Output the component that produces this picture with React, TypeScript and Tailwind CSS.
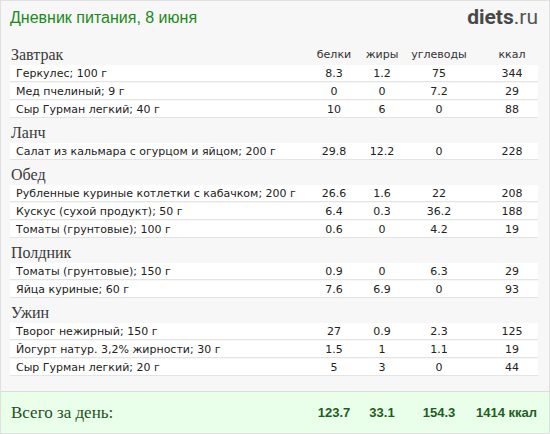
import React from "react";

type Item = { name: string; p: string; f: string; c: string; k: string };
type Meal = { title: string; items: Item[] };

const meals: Meal[] = [
  {
    title: "Завтрак",
    items: [
      { name: "Геркулес; 100 г", p: "8.3", f: "1.2", c: "75", k: "344" },
      { name: "Мед пчелиный; 9 г", p: "0", f: "0", c: "7.2", k: "29" },
      { name: "Сыр Гурман легкий; 40 г", p: "10", f: "6", c: "0", k: "88" },
    ],
  },
  {
    title: "Ланч",
    items: [{ name: "Салат из кальмара с огурцом и яйцом; 200 г", p: "29.8", f: "12.2", c: "0", k: "228" }],
  },
  {
    title: "Обед",
    items: [
      { name: "Рубленные куриные котлетки с кабачком; 200 г", p: "26.6", f: "1.6", c: "22", k: "208" },
      { name: "Кускус (сухой продукт); 50 г", p: "6.4", f: "0.3", c: "36.2", k: "188" },
      { name: "Томаты (грунтовые); 100 г", p: "0.6", f: "0", c: "4.2", k: "19" },
    ],
  },
  {
    title: "Полдник",
    items: [
      { name: "Томаты (грунтовые); 150 г", p: "0.9", f: "0", c: "6.3", k: "29" },
      { name: "Яйца куриные; 60 г", p: "7.6", f: "6.9", c: "0", k: "93" },
    ],
  },
  {
    title: "Ужин",
    items: [
      { name: "Творог нежирный; 150 г", p: "27", f: "0.9", c: "2.3", k: "125" },
      { name: "Йогурт натур. 3,2% жирности; 30 г", p: "1.5", f: "1", c: "1.1", k: "19" },
      { name: "Сыр Гурман легкий; 20 г", p: "5", f: "3", c: "0", k: "44" },
    ],
  },
];

const cols = "grid grid-cols-[300px_48px_48px_66px_15px_50px] items-center";

export default function App() {
  return (
    <div className="w-[550px] h-[434px] border border-[#e0e0e0] bg-[#f7f7f7] flex flex-col font-['DejaVu_Sans',sans-serif]">
      <div className="h-[40px] pl-[9px] pr-[11px] flex items-center justify-between">
        <div className="font-['Liberation_Sans',sans-serif] text-[16px] text-[#1b8a1b] leading-none pb-[6px]">
          Дневник питания, 8 июня
        </div>
        <div className="font-['Roboto',sans-serif] text-[21px] leading-none text-[#484848] pb-[8px]">
          <span className="font-bold">diets</span>
          <span className="text-[#555]">.ru</span>
        </div>
      </div>
      <div className="pl-[9px] pr-[11px]">
        {meals.map((m, i) => (
          <div key={m.title}>
            <div className={`${cols} h-[24px]`}>
              <div className="font-['Liberation_Serif',serif] text-[16px] text-[#3a3a3a] pl-px pt-[2px]">{m.title}</div>
              {i === 0 && (
                <>
                  <div className="text-center text-[11px] text-[#333] pt-[2px]">белки</div>
                  <div className="text-center text-[11px] text-[#333] pt-[2px]">жиры</div>
                  <div className="text-center text-[11px] text-[#333] pt-[2px]">углеводы</div>
                  <div />
                  <div className="text-center text-[11px] text-[#333] pt-[2px]">ккал</div>
                </>
              )}
            </div>
            {m.items.map((it) => (
              <div
                key={it.name}
                className={`${cols} h-[17px] bg-white border-b border-[#e4e4e4] mb-px text-[11px] text-[#222] leading-none`}
              >
                <div className="pl-[6px] whitespace-nowrap">{it.name}</div>
                <div className="text-center">{it.p}</div>
                <div className="text-center">{it.f}</div>
                <div className="text-center">{it.c}</div>
                <div />
                <div className="text-center">{it.k}</div>
              </div>
            ))}
          </div>
        ))}
      </div>
      <div className="mt-auto h-[42px] border-t border-[#dcdcdc] bg-[#eaffea] pl-[9px] pr-[11px] flex items-center">
        <div className={`${cols} w-full`}>
          <div className="font-['Liberation_Serif',serif] text-[17px] text-[#1e4f1e] pl-px">Всего за день:</div>
          <div className="text-center font-['Liberation_Sans',sans-serif] font-bold text-[13px] text-[#1d5e1d]">123.7</div>
          <div className="text-center font-['Liberation_Sans',sans-serif] font-bold text-[13px] text-[#1d5e1d]">33.1</div>
          <div className="text-center font-['Liberation_Sans',sans-serif] font-bold text-[13px] text-[#1d5e1d]">154.3</div>
          <div />
          <div className="justify-self-end whitespace-nowrap font-['Liberation_Sans',sans-serif] font-bold text-[13px] text-[#1d5e1d]">
            1414 ккал
          </div>
        </div>
      </div>
    </div>
  );
}
